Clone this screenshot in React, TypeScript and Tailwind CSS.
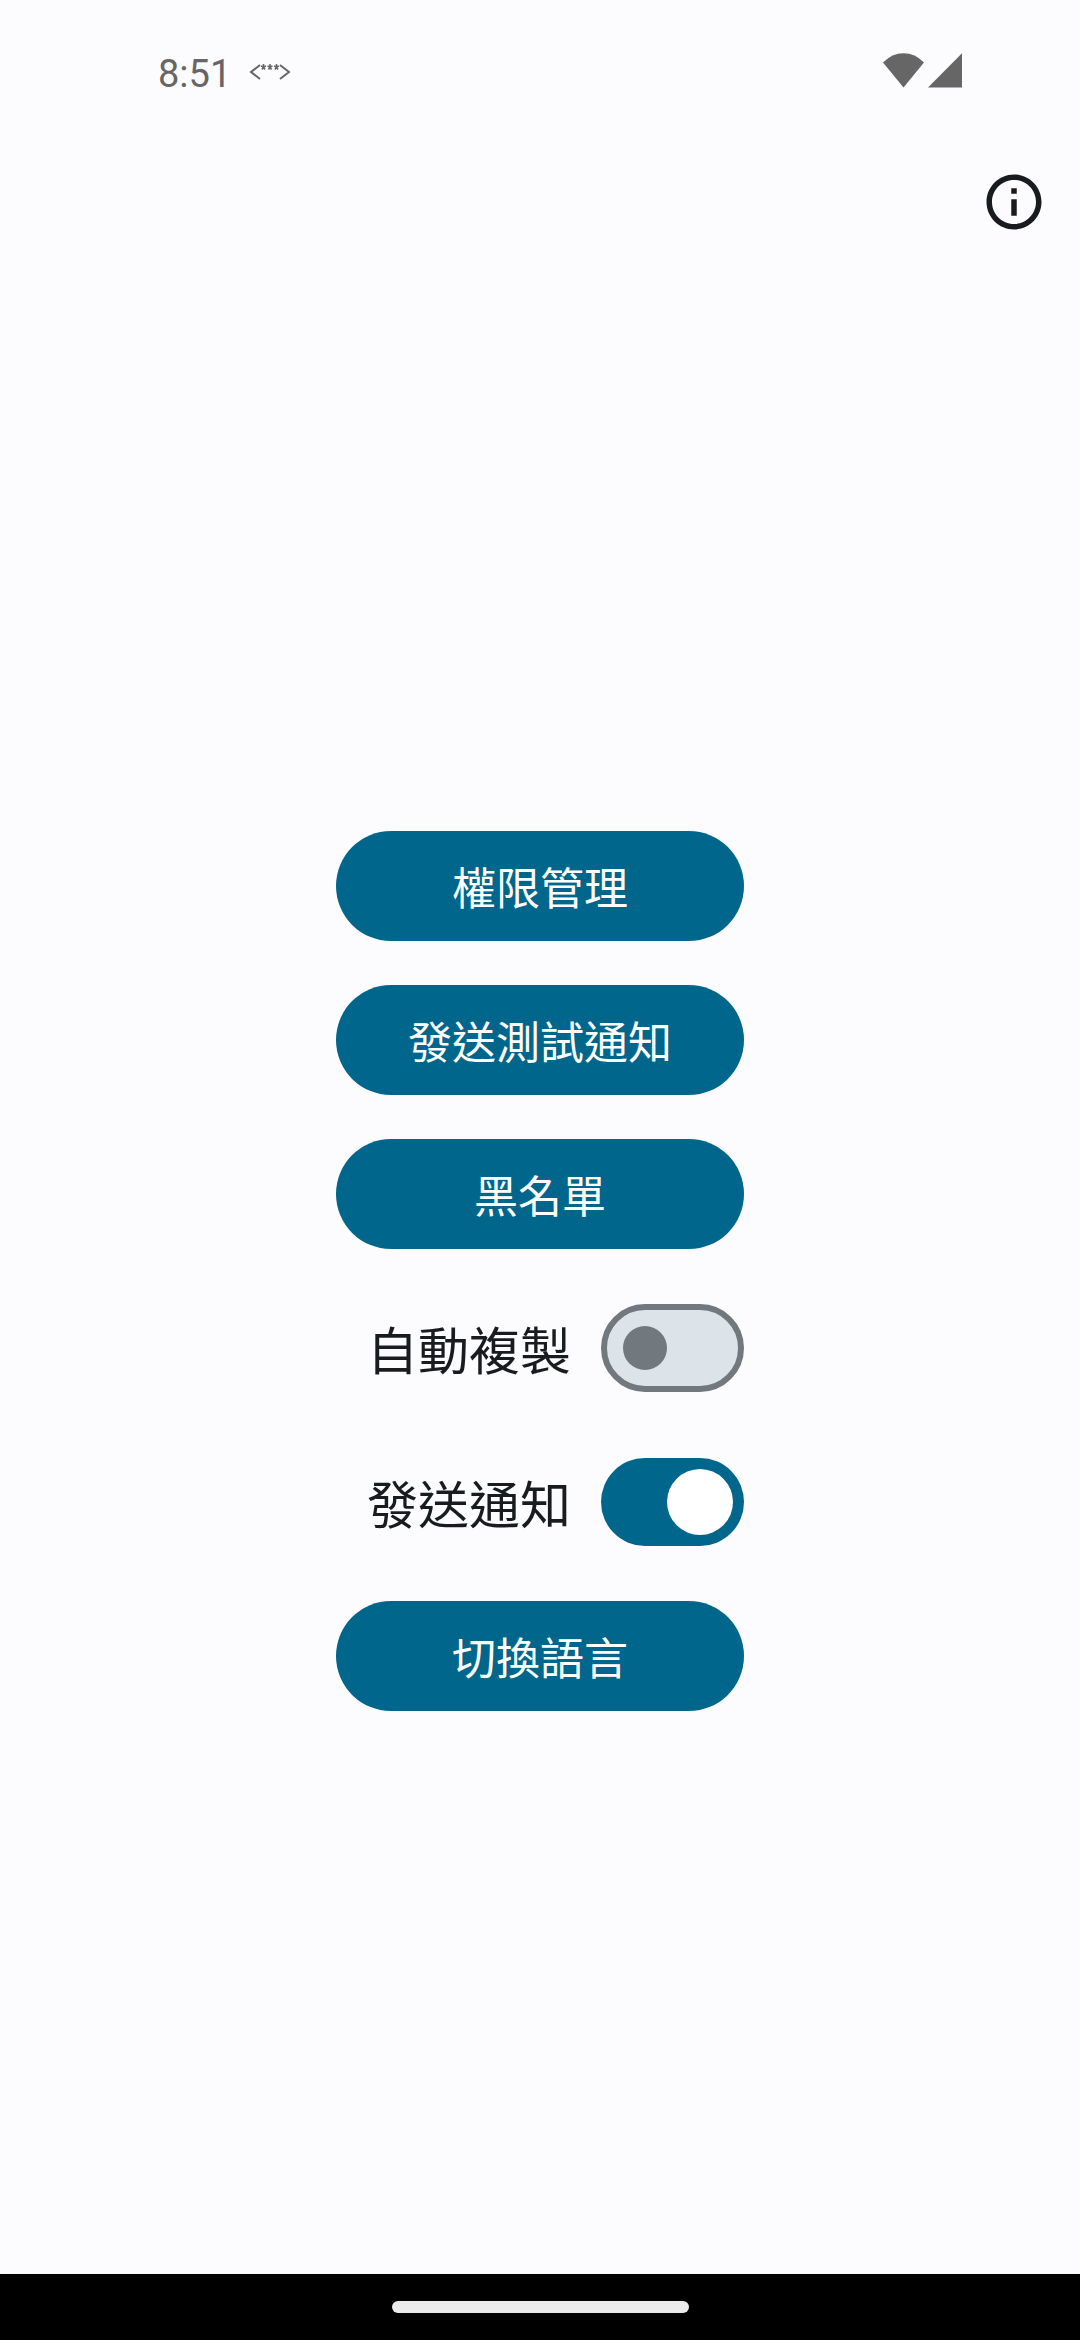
import { useState } from "react";

function ActionButton({ label }: { label: string }) {
  return (
    <button
      type="button"
      className="h-[110px] w-full rounded-full bg-[#00668b] px-[72px] text-[44px] leading-none text-white"
    >
      {label}
    </button>
  );
}

function ToggleRow({ id, label, initial }: { id: string; label: string; initial: boolean }) {
  const [on, setOn] = useState(initial);
  return (
    <div className="flex h-[110px] items-center justify-end gap-[30px]">
      <label htmlFor={id} className="text-[51px] leading-none text-[#191c1e]">
        {label}
      </label>
      <input
        id={id}
        type="checkbox"
        role="switch"
        checked={on}
        onChange={(e) => setOn(e.target.checked)}
        className="flex h-[88px] w-[143px] shrink-0 appearance-none items-center rounded-full border-6 border-[#71787e] bg-[#dce3e9] px-4 before:block before:size-[44px] before:rounded-full before:bg-[#71787e] before:content-[''] checked:justify-end checked:border-0 checked:bg-[#00668b] checked:px-[11px] checked:before:size-[66px] checked:before:bg-white"
      />
    </div>
  );
}

function StatusBar() {
  return (
    <div className="flex h-[136px] items-center justify-between pr-[118px] pl-[158px] text-[#666666]">
      <div className="flex items-center gap-[18px] pt-2">
        <span className="pt-1 font-[Roboto] text-[38px] leading-none">8:51</span>
        <svg width="42" height="18" viewBox="0 0 42 18" fill="none" stroke="currentColor" aria-hidden="true">
          <path d="M11 2 2 9l9 7M31 2l9 7-9 7" strokeWidth="2" />
          <path
            d="M14.500 1v3M12 3l2.500 1 2.500-1M13 6.500l1.500-2.500 1.500 2.500M21 1v3M18.500 3l2.500 1 2.500-1M19.500 6.500l1.500-2.500 1.500 2.500M27.500 1v3M25 3l2.500 1 2.500-1M26 6.500l1.500-2.500 1.500 2.500"
            strokeWidth="1.500"
          />
        </svg>
      </div>
      <div className="flex items-center gap-1 pt-1">
        <svg width="41" height="35" viewBox="0 0 41 35" fill="currentColor" aria-hidden="true">
          <path d="M0 9.500Q9 .3 20.500.3T41 9.500L20.500 34.500Z" />
        </svg>
        <svg width="34" height="35" viewBox="0 0 34 35" fill="currentColor" aria-hidden="true">
          <path d="M34 .3V34.500H0Z" />
        </svg>
      </div>
    </div>
  );
}

export default function App() {
  return (
    <div className="flex min-h-screen flex-col bg-[#fcfcff] font-['Noto_Sans_CJK_TC',sans-serif]">
      <StatusBar />
      <header className="flex h-[132px] items-center justify-end px-[33px]">
        <button type="button" aria-label="關於" className="text-[#191c1e]">
          <svg width="66" height="66" viewBox="0 0 24 24" fill="currentColor" aria-hidden="true">
            <path d="M11 7h2v2h-2zm0 4h2v6h-2zm1-9C6.480 2 2 6.480 2 12s4.480 10 10 10 10-4.480 10-10S17.520 2 12 2zm0 18c-4.410 0-8-3.590-8-8s3.590-8 8-8 8 3.590 8 8-3.590 8-8 8z" />
          </svg>
        </button>
      </header>
      <main className="flex grow items-center justify-center">
        <div className="flex flex-col gap-[44px]">
          <ActionButton label="權限管理" />
          <ActionButton label="發送測試通知" />
          <ActionButton label="黑名單" />
          <ToggleRow id="auto-copy" label="自動複製" initial={false} />
          <ToggleRow id="send-notification" label="發送通知" initial={true} />
          <ActionButton label="切換語言" />
        </div>
      </main>
      <footer className="flex h-[66px] items-center justify-center bg-black">
        <div className="h-[12px] w-[297px] rounded-full bg-[#ebebeb]" />
      </footer>
    </div>
  );
}
